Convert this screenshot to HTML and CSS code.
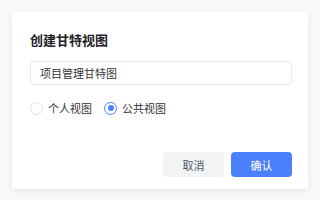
FILE: index.html
```html
<!DOCTYPE html>
<html lang="zh-CN">
<head>
    <meta charset="UTF-8">
    <meta name="viewport" content="width=device-width, initial-scale=1.0">
    <title>创建甘特视图</title>
    <link rel="stylesheet" href="styles.css">
</head>
<body>
    <div class="dialog">
        <h2 class="dialog-title">创建甘特视图</h2>
        <div class="name-input">项目管理甘特图</div>
        <div class="radio-group">
            <label class="radio"><span class="radio-dot"></span>个人视图</label>
            <label class="radio checked"><span class="radio-dot"></span>公共视图</label>
        </div>
        <div class="dialog-footer">
            <button class="btn btn-cancel">取消</button>
            <button class="btn btn-primary">确认</button>
        </div>
    </div>
</body>
</html>
```

FILE: styles.css
```css
body {
    margin: 0;
    padding: 12px;
    background-color: #f9f9f9;
    font-family: "Noto Sans CJK SC", "Noto Sans", sans-serif;
    color: #333;
}
.dialog {
    width: 296px;
    height: 177px;
    box-sizing: border-box;
    padding: 18px 16px 0 18px;
    background: #fff;
    border-radius: 2px;
    box-shadow: 0 2px 8px rgba(0, 0, 0, 0.08);
}
.dialog-title {
    margin: 0;
    font-size: 13px;
    line-height: 19px;
    font-weight: bold;
    color: #1f2329;
}
.name-input {
    margin-top: 12px;
    height: 24px;
    box-sizing: border-box;
    padding-left: 9px;
    border: 1px solid #e8e9ec;
    border-radius: 4px;
    font-size: 11px;
    line-height: 22px;
    color: #333;
}
.radio-group {
    display: flex;
    gap: 12px;
    margin-top: 16px;
    height: 14px;
}
.radio {
    display: flex;
    align-items: center;
    gap: 5px;
    font-size: 11px;
    line-height: 14px;
    color: #333;
}
.radio-dot {
    width: 13px;
    height: 13px;
    box-sizing: border-box;
    border: 1px solid #dcdfe6;
    border-radius: 50%;
    display: flex;
    align-items: center;
    justify-content: center;
}
.radio.checked .radio-dot {
    border-color: #4c80fa;
}
.radio.checked .radio-dot::after {
    content: "";
    width: 6px;
    height: 6px;
    border-radius: 50%;
    background: #4c80fa;
}
.dialog-footer {
    display: flex;
    justify-content: flex-end;
    gap: 7px;
    margin-top: 37px;
}
.btn {
    width: 61px;
    height: 25px;
    border: none;
    border-radius: 4px;
    font-family: inherit;
    font-size: 11px;
    padding: 0;
    cursor: pointer;
}
.btn-cancel {
    background: #f2f3f5;
    color: #4e5969;
}
.btn-primary {
    background: #4c80fa;
    color: #fff;
}
```
